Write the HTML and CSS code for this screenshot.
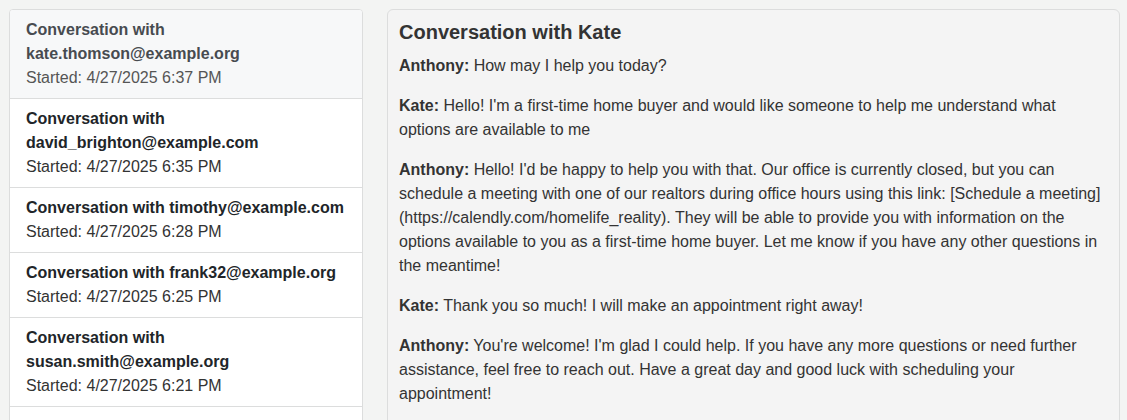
FILE: index.html
```html
<!DOCTYPE html>
<html lang="en">
<head>
<meta charset="utf-8">
<title>Conversations</title>
<link rel="stylesheet" href="styles.css">
</head>
<body>
<div class="layout">
  <ul class="conv-list">
    <li class="conv-item active">
      <div class="conv-title">Conversation with kate.thomson@example.org</div>
      <div class="conv-date">Started: 4/27/2025 6:37 PM</div>
    </li>
    <li class="conv-item">
      <div class="conv-title">Conversation with david_brighton@example.com</div>
      <div class="conv-date">Started: 4/27/2025 6:35 PM</div>
    </li>
    <li class="conv-item">
      <div class="conv-title">Conversation with timothy@example.com</div>
      <div class="conv-date">Started: 4/27/2025 6:28 PM</div>
    </li>
    <li class="conv-item">
      <div class="conv-title">Conversation with frank32@example.org</div>
      <div class="conv-date">Started: 4/27/2025 6:25 PM</div>
    </li>
    <li class="conv-item">
      <div class="conv-title">Conversation with susan.smith@example.org</div>
      <div class="conv-date">Started: 4/27/2025 6:21 PM</div>
    </li>
    <li class="conv-item">
      <div class="conv-title">Conversation with mark.lee@example.com</div>
      <div class="conv-date">Started: 4/27/2025 6:18 PM</div>
    </li>
  </ul>
  <section class="conv-view">
    <h2 class="conv-heading">Conversation with Kate</h2>
    <p class="msg"><strong>Anthony:</strong> How may I help you today?</p>
    <p class="msg"><strong>Kate:</strong> Hello! I'm a first-time home buyer and would like someone to help me understand what options are available to me</p>
    <p class="msg"><strong>Anthony:</strong> Hello! I'd be happy to help you with that. Our office is currently closed, but you can schedule a meeting with one of our realtors during office hours using this link: [Schedule a meeting](https://calendly.com/homelife_reality). They will be able to provide you with information on the options available to you as a first-time home buyer. Let me know if you have any other questions in the meantime!</p>
    <p class="msg"><strong>Kate:</strong> Thank you so much! I will make an appointment right away!</p>
    <p class="msg"><strong>Anthony:</strong> You're welcome! I'm glad I could help. If you have any more questions or need further assistance, feel free to reach out. Have a great day and good luck with scheduling your appointment!</p>
  </section>
</div>
</body>
</html>
```

FILE: styles.css
```css
html, body {
  margin: 0;
  padding: 0;
  overflow: hidden;
}
body {
  background: #f3f4f3;
  font-family: "Liberation Sans", Arial, sans-serif;
  font-size: 16px;
  line-height: 24px;
  color: #333;
}
.layout {
  display: flex;
  align-items: flex-start;
  gap: 24px;
  padding: 9px 7px 0 9px;
}
.conv-list {
  list-style: none;
  margin: 0;
  padding: 0;
  width: 354px;
  flex: none;
  box-sizing: border-box;
  background: #fff;
  border: 1px solid #dcdddd;
  border-radius: 4px;
  overflow: hidden;
}
.conv-item {
  padding: 8px 16px;
  border-bottom: 1px solid #dcdddd;
}
.conv-item:last-child {
  border-bottom: none;
}
.conv-item.active {
  background: #f7f8f9;
}
.conv-title {
  font-weight: bold;
  color: #212529;
}
.conv-item.active .conv-title {
  color: #474b50;
}
.conv-date {
  color: #333;
}
.conv-item.active .conv-date {
  color: #555;
}
.conv-view {
  flex: 1;
  min-width: 0;
  box-sizing: border-box;
  background: #f4f4f4;
  border: 1px solid #dcdddd;
  border-radius: 6px;
  padding: 10px 11px;
}
.conv-heading {
  margin: 0 0 10px;
  font-size: 20px;
  line-height: 24px;
  font-weight: bold;
  color: #333;
}
.msg {
  margin: 0 0 16px;
}
.msg strong {
  color: #333;
}
```
